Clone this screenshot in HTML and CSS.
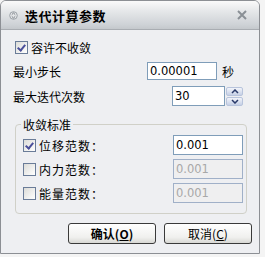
FILE: index.html
```html
<!DOCTYPE html>
<html lang="zh-CN">
<head>
    <meta charset="UTF-8">
    <title>迭代计算参数</title>
    <link rel="stylesheet" href="styles.css">
</head>
<body>
    <div class="window">
        <!-- タイトルバー -->
        <div class="titlebar">
            <span class="title-icon">
                <svg width="9" height="9" viewBox="0 0 9 9">
                    <circle cx="4.5" cy="4.5" r="3.8" fill="#e4e6e8" stroke="#9aa0a6"/>
                    <path d="M2.8 3.6 L4.5 2 L6.2 3.6 M2.8 5.4 L4.5 7 L6.2 5.4" fill="none" stroke="#6a7078" stroke-width="0.9"/>
                </svg>
            </span>
            <span class="title-text">迭代计算参数</span>
            <span class="title-close">
                <svg width="12" height="10" viewBox="0 0 12 10">
                    <path d="M2 1 L10 9 M10 1 L2 9" stroke="#8a9096" stroke-width="2"/>
                </svg>
            </span>
        </div>

        <div class="content">
            <label class="check-row">
                <span class="check checked"></span>容许不收敛
            </label>

            <div class="row row-step">
                <span class="label">最小步长</span>
                <span class="input w-step">0.00001</span>
                <span class="unit">秒</span>
            </div>

            <div class="row row-iter">
                <span class="label">最大迭代次数</span>
                <span class="input w-iter">30</span>
                <span class="spin">
                    <span class="spin-btn">
                        <svg width="8" height="5" viewBox="0 0 8 5"><path d="M1 4 L4 1 L7 4" fill="none" stroke="#2a3a6a" stroke-width="1.5"/></svg>
                    </span>
                    <span class="spin-btn">
                        <svg width="8" height="5" viewBox="0 0 8 5"><path d="M1 1 L4 4 L7 1" fill="none" stroke="#2a3a6a" stroke-width="1.5"/></svg>
                    </span>
                </span>
            </div>

            <!-- 収束基準 -->
            <div class="group">
                <span class="group-title">收敛标准</span>
                <div class="group-row">
                    <span class="check checked"></span>
                    <span class="glabel">位移范数：</span>
                    <span class="input w-norm">0.001</span>
                </div>
                <div class="group-row">
                    <span class="check"></span>
                    <span class="glabel">内力范数：</span>
                    <span class="input w-norm disabled">0.001</span>
                </div>
                <div class="group-row">
                    <span class="check"></span>
                    <span class="glabel">能量范数：</span>
                    <span class="input w-norm disabled">0.001</span>
                </div>
            </div>

            <div class="buttons">
                <button class="btn btn-ok">确认(<u>O</u>)</button>
                <button class="btn btn-cancel">取消(<u>C</u>)</button>
            </div>
        </div>
    </div>
</body>
</html>
```

FILE: styles.css
```css
body {
    margin: 0;
    background-color: #f4f4f4;
    font-family: "Noto Sans CJK SC", "Liberation Sans", sans-serif;
    font-size: 12px;
    color: #000;
}
.window {
    width: 258px;
    height: 252px;
    border: 1px solid #8c8f94;
    border-radius: 6px 6px 0 0;
    background-color: #eeeff2;
    overflow: hidden;
}
/* タイトルバー */
.titlebar {
    height: 28px;
    display: flex;
    align-items: center;
    background: linear-gradient(#fafafa, #e6e8ea 35%, #ced2d6 85%, #c4c8cc);
    border-bottom: 1px solid #a9adb2;
}
.title-icon {
    display: flex;
    margin-left: 8px;
    width: 9px;
}
.title-text {
    margin-left: 7px;
    font-weight: bold;
    font-size: 13px;
    letter-spacing: 0.5px;
    flex: 1;
}
.title-close {
    display: flex;
    margin-right: 11px;
}
.content {
    padding: 8px 0 0 12px;
}
.check {
    display: inline-block;
    box-sizing: border-box;
    width: 13px;
    height: 13px;
    border: 1px solid #1c5180;
    border-color: #6a7c98;
    background: linear-gradient(135deg, #dcdcd8, #ffffff);
    position: relative;
}
.check.checked::after {
    content: "";
    position: absolute;
    left: 3px;
    top: 1px;
    width: 3px;
    height: 6px;
    border: solid #4a4f9a;
    border-width: 0 2px 2px 0;
    transform: rotate(40deg);
}
.check-row {
    display: flex;
    align-items: center;
    gap: 3px;
    height: 18px;
    margin-left: 2px;
}
.row {
    display: flex;
    align-items: center;
}
.row-step {
    margin-top: 6px;
}
.row-iter {
    margin-top: 6px;
}
.label {
    width: 134px;
}
.row-iter .label {
    width: 159px;
}
.input {
    box-sizing: border-box;
    display: flex;
    align-items: center;
    border: 1px solid #7f9db9;
    background-color: #fff;
    padding-left: 2px;
    font-family: "DejaVu Sans", sans-serif;
    font-size: 11.5px;
}
.w-step {
    width: 70px;
    height: 18px;
}
.unit {
    margin-left: 5px;
}
.w-iter {
    width: 53px;
    height: 20px;
}
.spin {
    display: flex;
    flex-direction: column;
    gap: 1px;
    margin-left: 1px;
}
.spin-btn {
    box-sizing: border-box;
    width: 17px;
    height: 9px;
    display: flex;
    align-items: center;
    justify-content: center;
    border: 1px solid #b8c4dc;
    border-radius: 2px;
    background: linear-gradient(#f2f4fa, #c6d0e6);
}
/* 収束基準グループ */
.group {
    position: relative;
    width: 232px;
    height: 90px;
    margin-top: 18px;
    margin-left: 2px;
    border: 1px solid #d0d0c8;
    border-radius: 4px;
    padding-top: 10px;
    box-sizing: border-box;
}
.group-title {
    position: absolute;
    top: -9px;
    left: 5px;
    padding: 0 2px;
    background-color: #eeeff2;
}
.group-row {
    display: flex;
    align-items: center;
    margin-left: 7px;
    height: 20px;
    margin-bottom: 4px;
}
.glabel {
    margin-left: 3px;
    width: 134px;
    letter-spacing: 1px;
}
.w-norm {
    width: 70px;
    height: 20px;
}
.input.disabled {
    background-color: #efeff0;
    color: #a8a8a8;
    border-color: #a0b0c8;
}
.buttons {
    display: flex;
    gap: 8px;
    margin-top: 9px;
    margin-left: 55px;
}
.btn {
    height: 21px;
    border: 1px solid #3a3a3a;
    border-radius: 3px;
    background: linear-gradient(#ffffff, #f0f0ee 70%, #d8d8d4);
    font-family: "Noto Sans CJK SC", sans-serif;
    font-size: 12px;
    padding: 0;
    display: flex;
    align-items: center;
    justify-content: center;
}
.btn-ok {
    width: 88px;
    font-weight: bold;
}
.btn-cancel {
    width: 88px;
}
```
